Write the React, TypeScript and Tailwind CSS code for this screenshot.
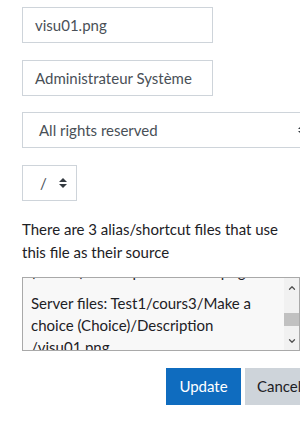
import { ChevronUp, ChevronDown } from "lucide-react";

function SortArrows() {
  return (
    <svg width="8" height="12" viewBox="0 0 8 12" className="shrink-0">
      <path d="M4 1 L8 5 L0 5 Z" fill="#343a40" />
      <path d="M0 7 L8 7 L4 11 Z" fill="#343a40" />
    </svg>
  );
}

export default function App() {
  return (
    <div
      className="w-[300px] h-[429px] overflow-hidden bg-white text-[15px] leading-[1.5] text-[#1d2125]"
      style={{ fontFamily: '"Segoe UI", Lato, sans-serif' }}
    >
      <div className="pl-[22px] pt-[7px]">
        {/* nom du fichier */}
        <div className="w-[191px] h-[36px] border border-[#ced4da] flex items-center px-[12px] text-[#495057] whitespace-nowrap">
          visu01.png
        </div>

        {/* auteur */}
        <div className="mt-[17px] w-[191px] h-[36px] border border-[#ced4da] flex items-center px-[12px] text-[#495057] whitespace-nowrap">
          Administrateur Système
        </div>

        {/* licence */}
        <div className="mt-[16px] w-[286px] h-[36px] border border-[#ced4da] flex items-center justify-between pl-[16px] pr-[1px] text-[#495057] whitespace-nowrap">
          <span>All rights reserved</span>
          <SortArrows />
        </div>

        {/* chemin */}
        <div className="mt-[17px] w-[55px] h-[36px] border border-[#ced4da] flex items-center gap-[12px] pl-[17px] text-[#495057]">
          <span>/</span>
          <SortArrows />
        </div>

        <p className="mt-[17px] w-[270px]">
          There are 3 alias/shortcut files that use this file as their source
        </p>

        {/* liste des alias */}
        <div className="mt-[14px] w-[278px] h-[74px] border border-[#a9a9a9] bg-[#f8f8f8] flex overflow-hidden">
          <div className="flex-1 overflow-hidden pl-[8px] text-[#1d2125] leading-[22px] whitespace-nowrap">
            <div className="-mt-[18px]">
              <div>(Choice)/Description/visu01.png</div>
              <div className="mt-[10px]">Server files: Test1/cours3/Make a</div>
              <div>choice (Choice)/Description</div>
              <div>/visu01.png</div>
            </div>
          </div>
          <div className="w-[15px] shrink-0 bg-[#f1f1f1] flex flex-col items-center text-[#505050]">
            <ChevronUp size={10} strokeWidth={3} className="mt-[5px]" />
            <div className="flex-1" />
            <div className="w-full h-[13px] bg-[#c1c1c1] mb-[10px]" />
            <ChevronDown size={10} strokeWidth={3} className="mb-[4px]" />
          </div>
        </div>

        {/* boutons */}
        <div className="mt-[17px] flex gap-[4px] pl-[144px]">
          <button className="w-[75px] h-[37px] shrink-0 bg-[#0f6cbf] text-white">Update</button>
          <button className="w-[70px] h-[37px] shrink-0 bg-[#ced4da] text-[#1d2125] text-left pl-[12px]">Cancel</button>
        </div>
      </div>
    </div>
  );
}
